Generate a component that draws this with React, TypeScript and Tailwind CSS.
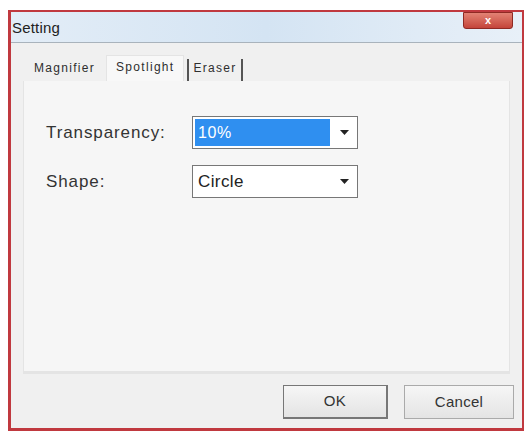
export default function App() {
  return (
    <div className="w-[529px] h-[434px] bg-white pt-[10px] pl-[8px]" style={{ fontFamily: '"Liberation Sans", Arial, sans-serif' }}>
      <div className="w-[516px] h-[421px] border-l-[3px] border-r-[2px] border-t-[2px] border-b-[3px] border-[#c0393f] bg-[#f0f0f0] flex flex-col">
        {/* title bar */}
        <div className="h-[31px] flex items-start justify-between bg-gradient-to-r from-[#e3edf7] via-[#d4e4f3] to-[#e8f0f8] border-b border-[#a9b3bc]">
          <span className="text-[15px] text-[#222] pl-[1px] pt-[5px] tracking-[0.2px]">Setting</span>
          <div className="w-[50px] h-[17px] mr-[9px] bg-gradient-to-b from-[#e38274] to-[#c4443a] border border-[#8f2a24] rounded-b-[3px] flex items-center justify-center">
            <span className="text-white text-[11px] font-bold leading-none">x</span>
          </div>
        </div>

        {/* tabs */}
        <div className="flex items-end pl-[12px] mt-[12px] h-[26px] text-[12px] text-[#2e2e2e] tracking-[1.3px]">
          <div className="px-[11px] pb-[4px]">Magnifier</div>
          <div className="px-[9px] pb-[5px] h-[26px] bg-[#f8f8f8] border-t border-x border-[#e4e4e4] flex items-end">Spotlight</div>
          <div className="px-[4px] pb-[4px] border-l-2 border-r-2 border-[#555] ml-[3px] h-[22px] flex items-end">Eraser</div>
        </div>

        {/* panel */}
        <div className="mx-[12px] h-[293px] bg-[#f6f6f6] border-b-[3px] border-[#a8a8a8] border-x border-[#e4e4e4] pt-[35px] pl-[22px]">
          <div className="flex items-center h-[33px]">
            <span className="w-[146px] text-[17px] text-[#333] tracking-[0.9px]">Transparency:</span>
            <div className="w-[166px] h-[33px] border border-[#777] flex bg-white">
              <div className="flex-1 bg-[#2f8ff0] text-white text-[16px] tracking-[0.6px] pl-[3px] flex items-center m-[2px]">10%</div>
              <div className="w-[25px] flex items-center justify-center">
                <svg width="9" height="5" viewBox="0 0 9 5"><path d="M0 0h9L4.5 5z" fill="#222" /></svg>
              </div>
            </div>
          </div>
          <div className="flex items-center h-[33px] mt-[16px]">
            <span className="w-[146px] text-[17px] text-[#333] tracking-[0.9px]">Shape:</span>
            <div className="w-[166px] h-[33px] border border-[#777] flex bg-white">
              <div className="flex-1 text-[#222] text-[17px] tracking-[0.4px] pl-[5px] flex items-center">Circle</div>
              <div className="w-[25px] flex items-center justify-center">
                <svg width="9" height="5" viewBox="0 0 9 5"><path d="M0 0h9L4.5 5z" fill="#222" /></svg>
              </div>
            </div>
          </div>
        </div>

        {/* buttons */}
        <div className="flex justify-end gap-[16px] pr-[8px] mt-[11px]">
          <button className="w-[105px] h-[34px] bg-gradient-to-b from-[#f6f6f6] to-[#e4e4e4] border border-[#777] border-b-2 border-r-2 text-[15px] text-[#333] tracking-[0.5px]">OK</button>
          <button className="w-[110px] h-[34px] bg-gradient-to-b from-[#f6f6f6] to-[#e4e4e4] border border-[#aaa] text-[15px] text-[#333] tracking-[0.3px]">Cancel</button>
        </div>
      </div>
    </div>
  )
}
